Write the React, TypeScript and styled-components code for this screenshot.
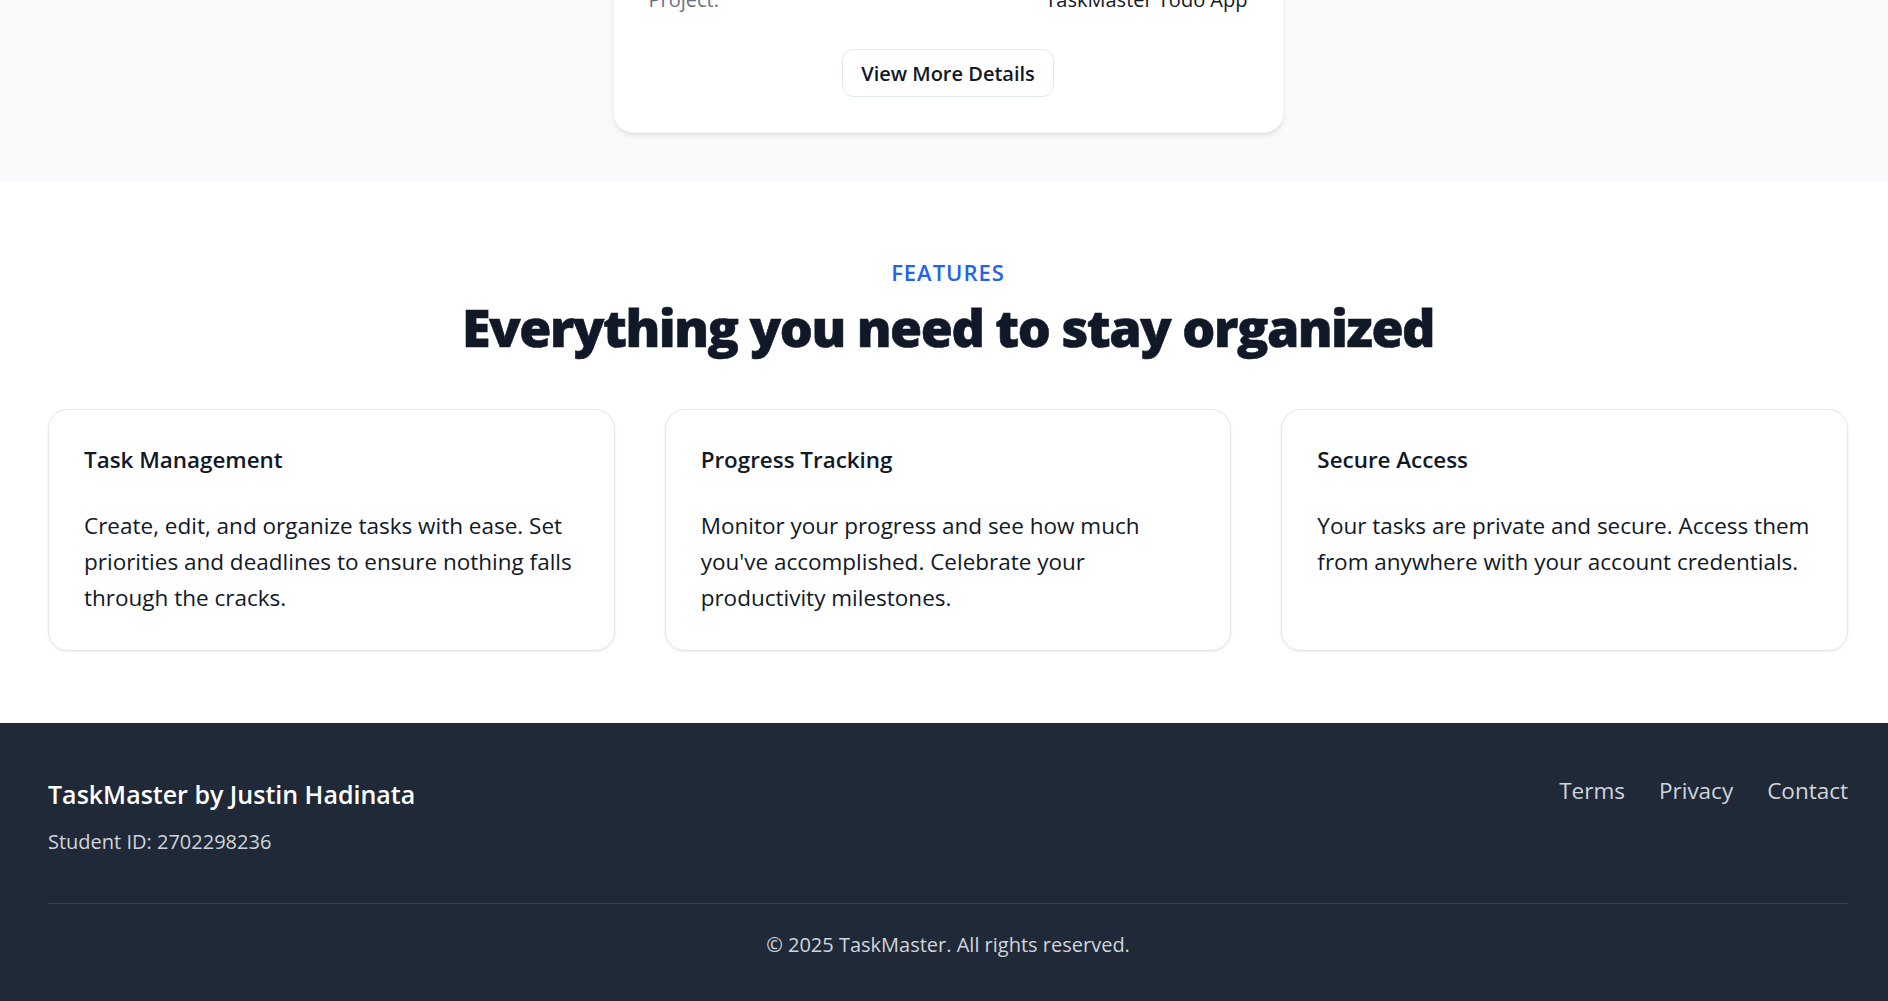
import React from "react";
import styled, { createGlobalStyle } from "styled-components";

const features = [
  {
    title: "Task Management",
    text: "Create, edit, and organize tasks with ease. Set priorities and deadlines to ensure nothing falls through the cracks.",
  },
  {
    title: "Progress Tracking",
    text: "Monitor your progress and see how much you've accomplished. Celebrate your productivity milestones.",
  },
  {
    title: "Secure Access",
    text: "Your tasks are private and secure. Access them from anywhere with your account credentials.",
  },
];

const links = ["Terms", "Privacy", "Contact"];

const App = () => {
  return (
    <>
      <GlobalStyle />
      <Hero>
        <Container>
          <InfoCard>
            <InfoRow>
              <InfoLabel>Project:</InfoLabel>
              <InfoValue>TaskMaster Todo App</InfoValue>
            </InfoRow>
            <ButtonRow>
              <DetailsButton>View More Details</DetailsButton>
            </ButtonRow>
          </InfoCard>
        </Container>
      </Hero>

      <Features>
        <Container>
          <Eyebrow>Features</Eyebrow>
          <Heading>Everything you need to stay organized</Heading>
          <FeatureGrid>
            {features.map((f) => (
              <FeatureCard key={f.title}>
                <FeatureTitle>{f.title}</FeatureTitle>
                <FeatureText>{f.text}</FeatureText>
              </FeatureCard>
            ))}
          </FeatureGrid>
        </Container>
      </Features>

      <Footer>
        <Container>
          <FooterTop>
            <div>
              <Brand>TaskMaster by Justin Hadinata</Brand>
              <StudentId>Student ID: 2702298236</StudentId>
            </div>
            <FooterLinks>
              {links.map((l) => (
                <FooterLink key={l} href="#">
                  {l}
                </FooterLink>
              ))}
            </FooterLinks>
          </FooterTop>
          <Divider />
          <Copyright>© 2025 TaskMaster. All rights reserved.</Copyright>
        </Container>
      </Footer>
    </>
  );
};

export default App;

const GlobalStyle = createGlobalStyle`
  * {
    box-sizing: border-box;
  }
  body {
    margin: 0;
    font-family: "Open Sans", "Noto Sans", sans-serif;
    color: #111827;
    background: #ffffff;
    overflow: hidden;
  }
`;

// content is centred a few px right of the viewport centre in the reference
const Container = styled.div`
  padding: 0 40px 0 48px;
`;

const Hero = styled.section`
  background-color: #f9fafb;
  padding-bottom: 49px;
  overflow: hidden;
`;

const InfoCard = styled.div`
  width: 671px;
  margin: -54px auto 0;
  padding: 35px;
  background: #ffffff;
  border: 1px solid #f1f3f6;
  border-radius: 20px;
  box-shadow: 0 4px 6px -1px rgba(0, 0, 0, 0.08),
    0 2px 4px -2px rgba(0, 0, 0, 0.06);
`;

const InfoRow = styled.div`
  display: flex;
  justify-content: space-between;
  font-size: 20px;
  line-height: 35px;
`;

const InfoLabel = styled.span`
  color: #6b7280;
`;

const InfoValue = styled.span`
  color: #111827;
`;

const ButtonRow = styled.div`
  display: flex;
  justify-content: center;
  margin-top: 32px;
`;

const DetailsButton = styled.button`
  height: 48px;
  padding: 0 18px;
  font-family: inherit;
  font-size: 20px;
  font-weight: 600;
  color: #111827;
  background: #ffffff;
  border: 1px solid #e2e8f0;
  border-radius: 11px;
  cursor: pointer;
  &:hover {
    background: #f9fafb;
  }
`;

const Features = styled.section`
  background: #ffffff;
  padding: 76px 0 72px;
  text-align: center;
`;

const Eyebrow = styled.div`
  color: #2563eb;
  font-size: 22px;
  font-weight: 600;
  line-height: 28px;
  letter-spacing: 1px;
  text-transform: uppercase;
`;

const Heading = styled.h2`
  margin: 11px 0 0;
  font-size: 52px;
  line-height: 60px;
  font-weight: 800;
  letter-spacing: -1.5px;
  color: #111827;
  -webkit-text-stroke: 0.6px #111827;
`;

const FeatureGrid = styled.div`
  display: grid;
  grid-template-columns: repeat(3, 1fr);
  gap: 50px;
  margin-top: 52px;
  text-align: left;
`;

const FeatureCard = styled.div`
  padding: 35px 32px 34px 35px;
  background: #ffffff;
  border: 1px solid #e5e7eb;
  border-radius: 20px;
  box-shadow: 0 1px 3px rgba(0, 0, 0, 0.08);
`;

const FeatureTitle = styled.h3`
  margin: 0;
  font-size: 22.4px;
  line-height: 30px;
  font-weight: 600;
  color: #111827;
`;

const FeatureText = styled.p`
  margin: 33px 0 0;
  font-size: 22.5px;
  line-height: 36px;
  color: #111827;
`;

const Footer = styled.footer`
  background-color: #1f2937;
  padding: 55px 0 50px;
`;

const FooterTop = styled.div`
  display: flex;
  justify-content: space-between;
  align-items: flex-start;
`;

const Brand = styled.div`
  color: #ffffff;
  font-size: 25px;
  line-height: 32px;
  font-weight: 600;
`;

const StudentId = styled.div`
  margin-top: 18px;
  color: #d1d5db;
  font-size: 20px;
  line-height: 28px;
`;

const FooterLinks = styled.nav`
  display: flex;
  gap: 34px;
  margin-top: -2px;
`;

const FooterLink = styled.a`
  color: #d1d5db;
  font-size: 22.5px;
  line-height: 30px;
  text-decoration: none;
  &:hover {
    color: #ffffff;
  }
`;

const Divider = styled.hr`
  margin: 47px 0 0;
  border: none;
  border-top: 1px solid #374151;
`;

const Copyright = styled.p`
  margin: 27px 0 0;
  text-align: center;
  color: #d1d5db;
  font-size: 20px;
  line-height: 28px;
`;
